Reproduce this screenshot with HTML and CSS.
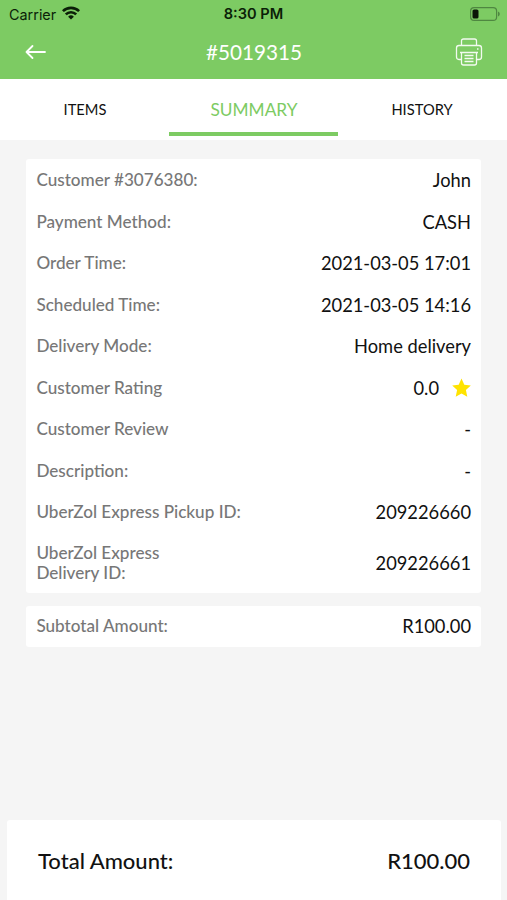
FILE: index.html
```html
<!DOCTYPE html>
<html lang="en">
<head>
<meta charset="utf-8">
<title>Order #5019315</title>
<link rel="stylesheet" href="styles.css">
</head>
<body>
<div class="app">
  <header class="header">
    <div class="status">
      <div class="carrier"><span>Carrier</span>
        <svg width="18" height="14" viewBox="0 0 18 14" fill="none" stroke="#0b1f08" stroke-width="2.6"><path d="M.9 5.200a11.500 11.500 0 0 1 16.200 0M3.800 8.400a7.300 7.300 0 0 1 10.400 0"/><path d="M9 13.600 6.100 10.700a4.100 4.100 0 0 1 5.800 0z" fill="#0b1f08" stroke="none"/></svg>
      </div>
      <div class="clock">8:30 PM</div>
      <svg class="battery" width="30" height="14" viewBox="0 0 30 14"><rect x=".6" y=".6" width="26" height="12.8" rx="3.500" fill="none" stroke="#4f8741" stroke-width="1.200"/><rect x="2.500" y="2.500" width="6" height="9" rx="1.600" fill="#0b1608"/><path d="M28 4.500q1.800.6 1.800 2.500T28 9.500z" fill="#4f8741"/></svg>
    </div>
    <div class="navbar">
      <svg class="back" width="22" height="16" viewBox="0 0 22 16" fill="none" stroke="#fff" stroke-width="1.800" stroke-linecap="round" stroke-linejoin="round"><path d="M20 8H1.500M7.500 2 1.500 8l6 6"/></svg>
      <h1>#5019315</h1>
      <svg class="printer" width="28" height="28" viewBox="0 0 28 28" fill="none" stroke="#fff" stroke-opacity=".9" stroke-width="1.300" stroke-linejoin="round"><path d="M6.500 7.500V3q0-2 2-2h11q2 0 2 2v4.500M6.500 21.500H4Q1.500 21.500 1.500 19v-9Q1.500 7.500 4 7.500h20q2.500 0 2.500 2.500v9q0 2.500-2.500 2.500h-2.500M5 14.500h18M6.500 14.500V25q0 2 2 2h11q2 0 2-2V14.500M9.500 17.500h9M9.500 20.500h9M9.500 23.500h9M22 11h1.500"/></svg>
    </div>
  </header>
  <nav class="tabs">
    <div class="tab">ITEMS</div>
    <div class="tab active">SUMMARY</div>
    <div class="tab last">HISTORY</div>
  </nav>
  <main class="content">
    <section class="card">
      <div class="row"><span class="label">Customer #3076380:</span><span class="value">John</span></div>
      <div class="row"><span class="label">Payment Method:</span><span class="value">CASH</span></div>
      <div class="row"><span class="label">Order Time:</span><span class="value">2021-03-05 17:01</span></div>
      <div class="row"><span class="label">Scheduled Time:</span><span class="value">2021-03-05 14:16</span></div>
      <div class="row"><span class="label">Delivery Mode:</span><span class="value">Home delivery</span></div>
      <div class="row"><span class="label">Customer Rating</span><span class="value rating">0.0 <svg width="20" height="20" viewBox="0 0 20 20"><path fill="#ffe300" d="m10.500.5 2.800 6.200 6.500.7-4.900 4.600 1.400 6.800-5.800-3.400-5.800 3.400L6.100 12 1.200 7.400l6.500-.7z"/></svg></span></div>
      <div class="row"><span class="label">Customer Review</span><span class="value">-</span></div>
      <div class="row"><span class="label">Description:</span><span class="value">-</span></div>
      <div class="row"><span class="label">UberZol Express Pickup ID:</span><span class="value">209226660</span></div>
      <div class="row tall"><span class="label">UberZol Express<br>Delivery ID:</span><span class="value">209226661</span></div>
    </section>
    <section class="card subtotal">
      <div class="row"><span class="label">Subtotal Amount:</span><span class="value">R100.00</span></div>
    </section>
  </main>
  <footer class="total"><span>Total Amount:</span><span>R100.00</span></footer>
</div>
</body>
</html>
```

FILE: styles.css
```css
* { box-sizing: border-box; }
body { margin: 0; font-family: Lato, sans-serif; color: #111; }
.app { height: 900px; display: flex; flex-direction: column; background: #f5f5f5; overflow: hidden; }
.header { height: 79px; flex: none; background: #7dcb63; }
.status { height: 27px; padding: 0 7px 0 9px; display: grid; grid-template-columns: 1fr auto 1fr; align-items: center; font: 14.4px/27px Inter, sans-serif; color: #0b1f08; }
.carrier { display: flex; align-items: center; gap: 6px; }
.carrier svg { margin-top: -2px; }
.clock { font-weight: 600; font-size: 14.6px; padding: 1px 2px 0 0; }
.battery { justify-self: end; margin-top: -1px; }
.navbar { height: 50px; padding: 0 24px 0 25px; display: grid; grid-template-columns: 1fr auto 1fr; align-items: center; color: #fff; }
.navbar h1 { margin: 0; font-size: 20.7px; font-weight: 400; }
.printer { justify-self: end; }
.tabs { height: 61px; flex: none; display: grid; grid-template-columns: repeat(3, 1fr); background: #fff; }
.tab { height: 57px; display: flex; align-items: center; justify-content: center; padding: 3px 0 0 1px; font-size: 14.7px; }
.active { font-size: 17.3px; color: #7dcb63; border-bottom: 4px solid #7dcb63; padding-top: 7px; }
.last { padding: 3px 1px 0 0; }
.content { flex: 1; padding: 18.5px 26px 0; }
.card { background: #fff; border-radius: 3px; padding: 1px 10px 0; height: 434px; }
.subtotal { margin-top: 13px; height: 41px; padding-top: 0; }
.row { height: 41.5px; display: flex; align-items: center; justify-content: space-between; }
.tall { height: 60.5px; }
.label { padding-left: .4px; font-size: 17.12px; line-height: 20.5px; color: #777; font-weight: 500; }
.value { font-size: 18.3px; }
.rating { display: flex; align-items: center; gap: 12px; }
.total { height: 80px; flex: none; margin: 0 6px 0 7px; padding: 0 31px; display: flex; align-items: center; justify-content: space-between; background: #fff; border-radius: 3px 3px 0 0; font-size: 22px; font-weight: 500; }
```
